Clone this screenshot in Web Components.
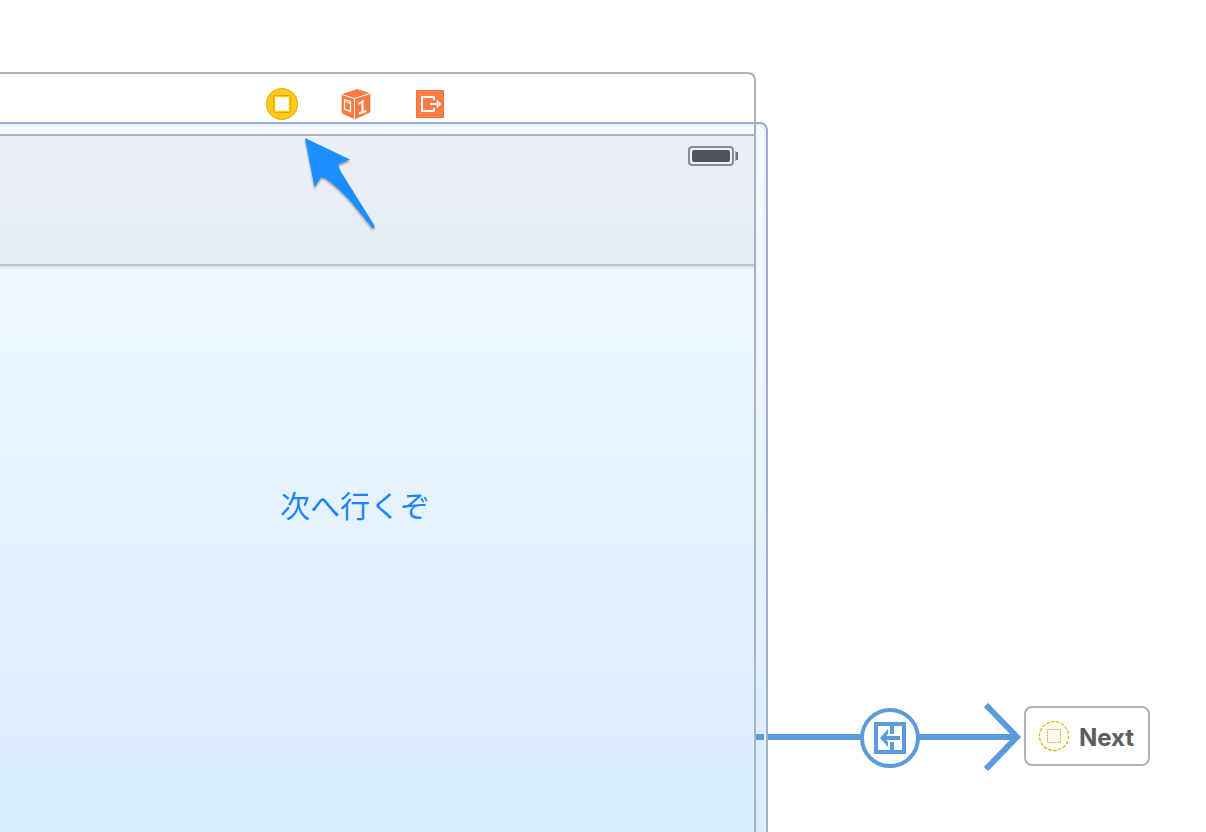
<!DOCTYPE html>
<html lang="ja">
<head>
<meta charset="utf-8">
<title>Storyboard</title>
<style>
  html, body { margin: 0; height: 100%; }
  body { background: #fff; font-family: "Inter", "Noto Sans CJK JP", sans-serif; }
</style>
</head>
<body>
<story-canvas>
  <scene-view slot="scene">
    <scene-dock slot="dock"></scene-dock>
    <phone-screen>次へ行くぞ</phone-screen>
  </scene-view>
  <segue-link slot="segue"><scene-reference>Next</scene-reference></segue-link>
</story-canvas>
<script>
const define = (name, html) => customElements.define(name, class extends HTMLElement {
  constructor() {
    super();
    this.attachShadow({ mode: 'open' }).innerHTML = html;
  }
});

define('story-canvas', `
  <style>
    :host { display: block; height: 100%; }
    main { display: grid; grid-template-columns: minmax(0, 1fr) 438px; height: 100%; overflow: hidden; }
  </style>
  <main><slot name="scene"></slot><slot name="segue"></slot></main>`);

define('scene-view', `
  <style>
    :host { display: flex; flex-direction: column; margin-left: -44px; padding-top: 72px; box-sizing: border-box; min-width: 0; min-height: 0; }
    .frame { flex: 1; position: relative; display: flex; min-height: 0; padding-right: 10px;
      border: solid #98b0d9; border-width: 2px 2px 0 0; border-radius: 0 8px 0 0;
      box-shadow: inset -2px 2px #ededf0;
      background: linear-gradient(#f4faff, #eef7ff 22%, #d9edfe); }
    .stub { position: absolute; right: 2px; top: 610px; width: 8px; height: 6px; background: #5c9bdb; }
  </style>
  <slot name="dock"></slot>
  <div class="frame"><slot></slot><span class="stub"></span></div>`);

define('scene-dock', `
  <style>
    :host { display: flex; justify-content: center; gap: 42px; margin-right: 12px; padding: 14px 0 0 2px; box-sizing: border-box;
      border: solid #b2b2b2; border-width: 2px 2px 0 0; border-radius: 0 8px 0 0; height: 50px; }
    button { all: unset; width: 32px; height: 32px; }
    svg { display: block; }
  </style>
  <button aria-label="View Controller"><svg width="32" height="32" viewBox="0 0 32 32">
    <circle cx="16" cy="16" r="15.4" fill="#fdcd14" stroke="#e8b021" stroke-width="1.2"/>
    <rect x="7.5" y="7.5" width="17" height="17" rx="1" fill="#fdcd14" stroke="#dda51c" stroke-width="1"/>
    <rect x="10" y="10" width="12" height="12" fill="#fff"/>
    <rect x="9.500" y="9.500" width="13" height="13" fill="none" stroke="#fff" stroke-dasharray="2 1"/>
  </svg></button>
  <button aria-label="First Responder"><svg width="32" height="32" viewBox="0 0 32 32">
    <path d="M2 6.500 17 1.500 30 5.500V24L15 31 2 25Z" fill="#fc7b43" stroke="#e87142" stroke-width=".7"/>
    <path d="M2 6.500 14.500 10.500 30 5.500M14.500 10.500V31" fill="none" stroke="#fff" stroke-width="1"/>
    <path d="M4.500 11.500 10.500 13.500V23.500L4.500 21Z" fill="none" stroke="#fff" stroke-width="1.200"/>
    <path d="M5 13.500 10 15.500" fill="none" stroke="#fff" stroke-width="1.200" stroke-dasharray="1.500 .7"/>
    <path d="M18.500 16 22.500 13.500V24.500M19 25.500 26 23" fill="none" stroke="#fff" stroke-width="2"/>
  </svg></button>
  <button aria-label="Exit"><svg width="32" height="32" viewBox="0 0 32 32">
    <path d="M2.500 2.500H29.500V29.500H2.500Z" fill="#fd7d43" stroke="#ec7440"/>
    <path d="M20 12V9H8V23H20V20M16 16H25" fill="none" stroke="#fff" stroke-width="2"/>
    <path d="M23 12 27 16 23 20Z" fill="#fff" stroke="#fff" stroke-width=".5"/>
  </svg></button>`);

define('phone-screen', `
  <style>
    :host { flex: 1; display: flex; flex-direction: column; padding-top: 10px; border-right: 2px solid #a9b0bb; min-width: 0; }
    header { position: relative; display: flex; justify-content: flex-end; height: 118px; padding: 10px 16px 0 0;
      border-top: 2px solid #aeb3bd; border-bottom: 2px solid #bfc5cd; box-shadow: 0 2px 3px #aab6c466;
      background: linear-gradient(#ebf0f8, #e7edf4); }
    .pointer { position: absolute; left: 346px; top: 0; filter: drop-shadow(0 2px 1px #3458); }
    .content { display: flex; justify-content: center; padding-top: 214px; }
    button { all: unset; color: #1a86ff; font: 400 30px/48px "Noto Sans CJK JP", sans-serif; }
    svg { display: block; }
  </style>
  <header>
    <svg width="50" height="20" viewBox="0 0 50 20" role="img" aria-label="Battery">
      <rect x="1" y="1" width="44" height="18" rx="3" fill="#f0f4fa" stroke="#858a93" stroke-width="2"/>
      <rect x="4" y="4" width="38" height="12" rx="2" fill="#4d535d"/>
      <path d="M47 5H48V15H47Z" fill="#a5aab2"/><path d="M48 6H50V14H48Z" fill="#6c727b"/>
    </svg>
    <svg class="pointer" width="76" height="98" viewBox="0 0 76 98" aria-hidden="true">
      <path d="M3 2 48 23.500 36.500 28Q36 30 39 36L71.500 88Q74 93 70 91.500C58 77 48 62 31 48Q22 40 19 41L12.500 51Z" fill="#1b8fff"/>
    </svg>
  </header>
  <div class="content"><button><slot></slot></button></div>`);

define('segue-link', `
  <style>
    :host { display: flex; align-items: flex-start; padding: 700px 56px 0 0; }
    .line { flex: 1; height: 6px; margin-top: 34px; background: #5c9bdb; }
    svg { display: block; flex: none; }
    slot { display: block; padding-top: 6px; }
  </style>
  <span class="line"></span>
  <svg width="60" height="72" viewBox="0 0 60 72" role="img" aria-label="Show segue">
    <path d="M0 34H3V40H0ZM57 34H60V40H57Z" fill="#5c9bdb"/>
    <circle cx="30" cy="38" r="28" fill="#fff" stroke="#5c9bdb" stroke-width="4"/>
    <path d="M16 24H44V52H16Z" fill="none" stroke="#5c9bdb" stroke-width="4"/>
    <path d="M32 24V34M32 42V52M24 38H40" fill="none" stroke="#5c9bdb" stroke-width="4"/>
    <path d="M28 29V34L24.500 38 28 42V47L20 38Z" fill="#5c9bdb"/>
  </svg>
  <svg width="104" height="72" viewBox="0 0 104 72" aria-hidden="true">
    <path d="M0 37H97M66 5 97 37 66 69" fill="none" stroke="#5c9bdb" stroke-width="6"/>
  </svg>
  <slot></slot>`);

define('scene-reference', `
  <style>
    :host { display: block; }
    a { display: flex; align-items: center; gap: 9px; width: 126px; height: 60px; padding-left: 12px; box-sizing: border-box;
      border: 2px solid #b2b2b2; border-radius: 8px; background: #fff; color: #5d5d5d;
      font: 700 24px/32px "Inter", sans-serif; text-decoration: none; }
    svg { flex: none; }
    slot { display: block; padding-top: 4px; }
  </style>
  <a href="#next"><svg width="32" height="32" viewBox="0 0 32 32" aria-hidden="true">
    <circle cx="16" cy="16" r="14.500" fill="none" stroke="#e6ae1e" stroke-width="1.3" stroke-dasharray="3.500 1.500"/>
    <path d="M9.500 9.500H22.500V22.500H9.500Z" fill="none" stroke="#e2a814" stroke-dasharray="2 1"/>
  </svg><slot></slot></a>`);
</script>
</body>
</html>
